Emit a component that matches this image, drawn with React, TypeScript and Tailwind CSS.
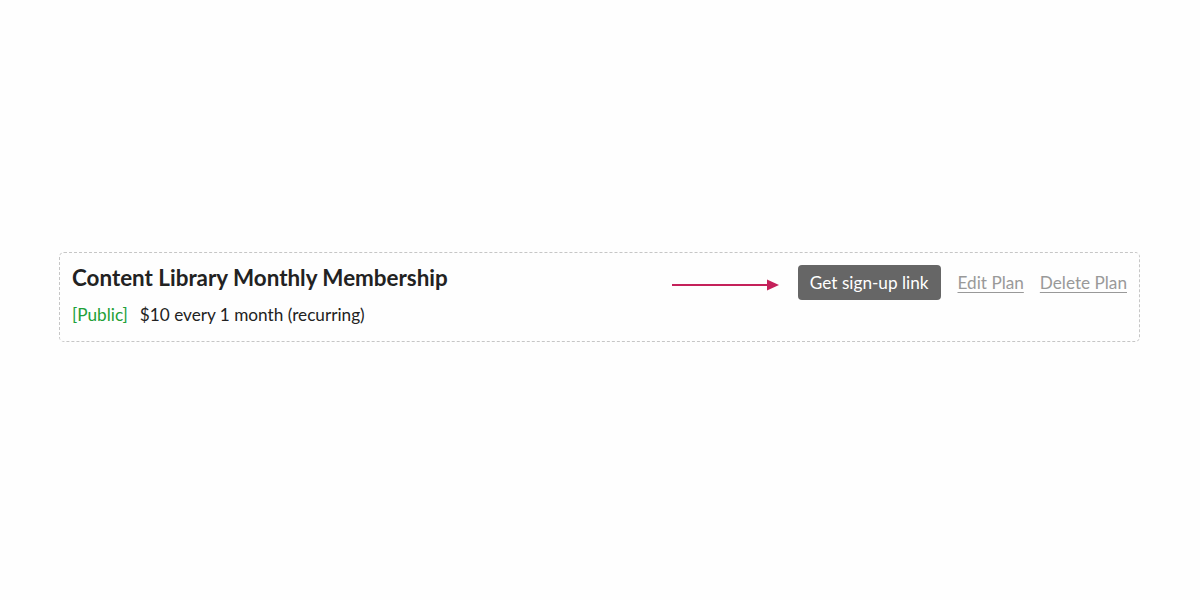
export default function App() {
  return (
    <div className="min-h-[600px] w-full bg-[#fefefe] pt-[252px] pl-[59px] pr-[60px] font-['Lato',sans-serif]">
      <div className="flex items-start justify-between rounded-[5px] border border-dashed border-[#c6c6c6] pl-[12px] pr-[12px] pt-[10px] pb-[14px]">
        <div className="flex flex-col">
          <h2 className="text-[22.4px] font-bold leading-[30px] text-[#222222]">Content Library Monthly Membership</h2>
          <div className="mt-[10px] flex items-center gap-[12px] text-[17.2px] leading-[24px]">
            <span className="text-[#21a038]">[Public]</span>
            <span className="text-[#222222]">$10 every 1 month (recurring)</span>
          </div>
        </div>
        <div className="mt-[2px] flex items-center">
          <svg width="108" height="14" viewBox="0 0 108 14" className="mr-[18px] mt-[4px]">
            <line x1="0" y1="7" x2="96" y2="7" stroke="#c4215a" strokeWidth="2" />
            <path d="M95 1.5 L107 7 L95 12.5 Z" fill="#c4215a" />
          </svg>
          <button className="h-[35px] rounded-[4px] bg-[#666666] px-[12px] text-[17.2px] text-white">Get sign-up link</button>
          <a href="#" className="ml-[17px] text-[17.2px] text-[#999999] underline underline-offset-[3px]">Edit Plan</a>
          <a href="#" className="ml-[16px] text-[17.2px] text-[#999999] underline underline-offset-[3px]">Delete Plan</a>
        </div>
      </div>
    </div>
  );
}
